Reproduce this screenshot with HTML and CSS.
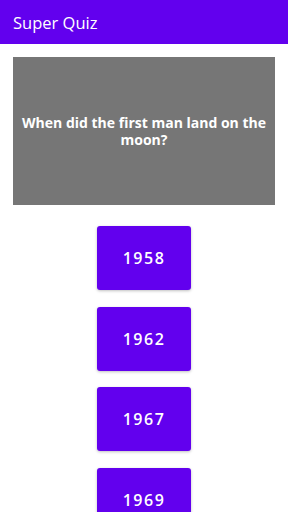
FILE: index.html
```html
<!DOCTYPE html>
<html lang="en">
<head>
    <meta charset="UTF-8">
    <title>Super Quiz</title>
    <link rel="stylesheet" href="styles.css">
</head>
<body>
    <div class="app-bar">Super Quiz</div>
    <div class="content">
        <div class="question-box">
            When did the first man land on the moon?
        </div>
        <div class="answers">
            <button class="answer">1958</button>
            <button class="answer">1962</button>
            <button class="answer">1967</button>
            <button class="answer">1969</button>
        </div>
    </div>
</body>
</html>
```

FILE: styles.css
```css
body {
    font-family: "Open Sans", Arial, sans-serif;
    background-color: #fff;
    margin: 0;
    height: 512px;
    overflow: hidden;
}
.app-bar {
    background-color: #6200ee;
    color: #fff;
    height: 44px;
    padding-left: 13px;
    display: flex;
    align-items: center;
    font-size: 16.5px;
    font-weight: 500;
}
.content {
    padding: 13px 13px 0;
}
.question-box {
    background-color: #767676;
    color: #fff;
    height: 148px;
    display: flex;
    justify-content: center;
    align-items: center;
    text-align: center;
    font-weight: bold;
    font-size: 14px;
    line-height: 17px;
    padding: 0 8px;
}
.answers {
    display: flex;
    flex-direction: column;
    align-items: center;
    gap: 16.5px;
    margin-top: 21px;
}
.answer {
    background-color: #6200ee;
    color: #fff;
    border: none;
    border-radius: 3px;
    width: 94px;
    height: 64px;
    font-family: "Open Sans", Arial, sans-serif;
    font-size: 16px;
    font-weight: 600;
    letter-spacing: 1.5px;
    box-shadow: 0 1px 3px rgba(0, 0, 0, 0.25);
}
```
